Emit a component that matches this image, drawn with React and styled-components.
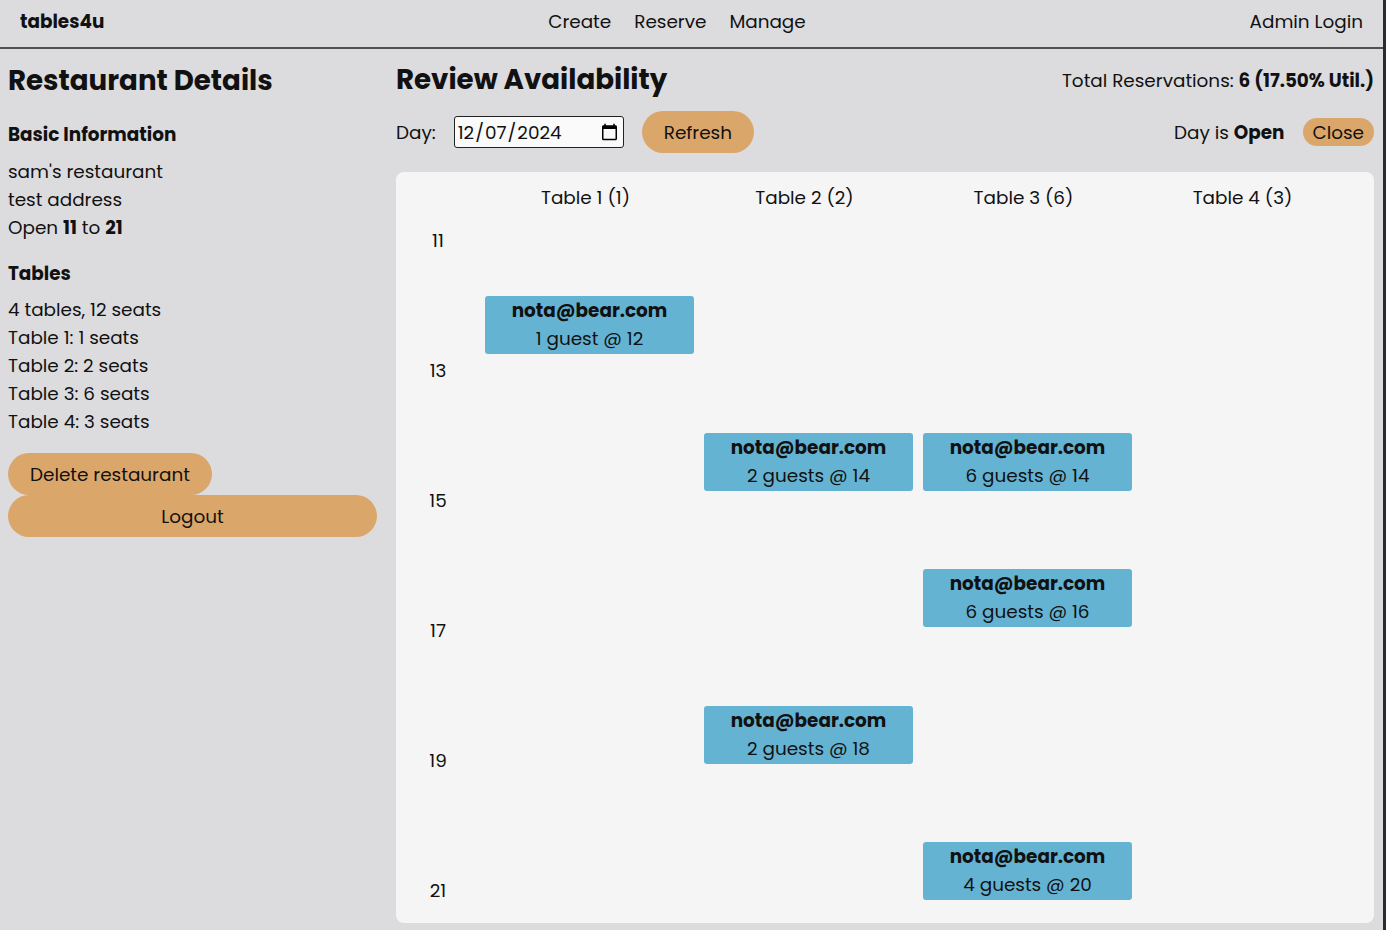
import React from "react";
import styled, { createGlobalStyle } from "styled-components";

const FONT = `"Poppins", "Inter", "Noto Sans", sans-serif`;
const FS = "18.4px";

const Global = createGlobalStyle`
  html, body { margin: 0; padding: 0; background: #dcdcdf; }
  body { font-family: ${FONT}; color: #111; }
  * { box-sizing: border-box; }
`;

const Page = styled.div`
  width: 1386px;
  height: 930px;
  background: #dcdcdf;
  border-right: 3px solid #2b2b2b;
  overflow: hidden;
`;

const TopBar = styled.header`
  height: 49px;
  display: flex;
  align-items: center;
  justify-content: space-between;
  padding: 0 20px 4px;
  border-bottom: 2px solid #505050;
  font-size: ${FS};
`;

const Brand = styled.div`
  font-weight: 700;
`;

const Nav = styled.nav`
  display: flex;
  gap: 23px;
`;

const NavLink = styled.span`
  font-weight: 400;
`;

const Body = styled.div`
  display: flex;
  gap: 18px;
  padding: 11px 9px 0 8px;
`;

const Side = styled.aside`
  width: 370px;
  flex: none;
  display: flex;
  flex-direction: column;
  padding-top: 1px;
`;

const Title = styled.h1`
  margin: 0;
  font-size: 27.7px;
  line-height: 40px;
  font-weight: 700;
`;

const SubHead = styled.h3`
  margin: ${(p) => p.$mt}px 0 ${(p) => p.$mb}px;
  font-size: ${FS};
  line-height: 28px;
  font-weight: 700;
`;

const Line = styled.div`
  font-size: ${FS};
  line-height: 28px;
  b { font-weight: 700; }
`;

const Pill = styled.button`
  font-family: ${FONT};
  font-size: ${FS};
  color: #111;
  background: #dba66a;
  border: none;
  border-radius: 999px;
  height: ${(p) => p.$h}px;
  padding: 0 ${(p) => p.$px}px;
  width: ${(p) => (p.$full ? "100%" : "auto")};
  align-self: flex-start;
  cursor: pointer;
`;

const ButtonStack = styled.div`
  margin-top: 17px;
  display: flex;
  flex-direction: column;
  width: 369px;
`;

const Main = styled.main`
  flex: 1;
  display: flex;
  flex-direction: column;
`;

const Row = styled.div`
  display: flex;
  align-items: center;
  justify-content: space-between;
  height: ${(p) => p.$h}px;
  margin-top: ${(p) => p.$mt || 0}px;
`;

const Group = styled.div`
  display: flex;
  align-items: center;
  gap: ${(p) => p.$gap}px;
  font-size: ${FS};
  b { font-weight: 700; }
`;

const DateBox = styled.input`
  font-family: ${FONT};
  font-size: ${FS};
  width: 170px;
  height: 32px;
  padding: 0 2px;
  border: 1px solid #222;
  border-radius: 3px;
  background: #fafafa;
  color: #111;
`;

const Panel = styled.section`
  margin-top: 19px;
  background: #f5f5f5;
  border-radius: 8px;
  display: flex;
  padding: 0 18px 18px 0;
`;

const HourCol = styled.div`
  width: 84px;
  flex: none;
  display: flex;
  flex-direction: column;
  align-items: center;
  gap: 103px;
  padding-top: 54.5px;
`;

const Hour = styled.div`
  font-size: ${FS};
  line-height: 27px;
`;

const TableCol = styled.div`
  width: 219px;
  flex: none;
  display: flex;
  flex-direction: column;
`;

const TableHead = styled.div`
  height: 50.75px;
  display: flex;
  align-items: center;
  justify-content: center;
  font-size: ${FS};
  padding-right: 8px;
`;

const Slot = styled.div`
  height: 68.25px;
  padding: 5px 5px;
`;

const Booking = styled.div`
  height: 100%;
  background: #65b3d3;
  border-radius: 3px;
  display: flex;
  flex-direction: column;
  align-items: center;
  justify-content: center;
  font-size: ${FS};
  line-height: 28px;
  b { font-weight: 700; }
`;

const tables = [
  { name: "Table 1", seats: 1 },
  { name: "Table 2", seats: 2 },
  { name: "Table 3", seats: 6 },
  { name: "Table 4", seats: 3 },
];

const bookings = {
  "0-12": 1,
  "1-14": 2,
  "2-14": 6,
  "2-16": 6,
  "1-18": 2,
  "2-20": 4,
};

const slots = [11, 12, 13, 14, 15, 16, 17, 18, 19, 20];

export default function App() {
  return (
    <>
      <Global />
      <Page>
        <TopBar>
          <Brand>tables4u</Brand>
          <Nav>
            <NavLink>Create</NavLink>
            <NavLink>Reserve</NavLink>
            <NavLink>Manage</NavLink>
          </Nav>
          <NavLink>Admin Login</NavLink>
        </TopBar>
        <Body>
          <Side>
            <Title>Restaurant Details</Title>
            <SubHead $mt={20} $mb={9}>Basic Information</SubHead>
            <Line>sam's restaurant</Line>
            <Line>test address</Line>
            <Line>
              Open <b>11</b> to <b>21</b>
            </Line>
            <SubHead $mt={18} $mb={8}>Tables</SubHead>
            <Line>4 tables, 12 seats</Line>
            {tables.map((t) => (
              <Line key={t.name}>
                {t.name}: {t.seats} seats
              </Line>
            ))}
            <ButtonStack>
              <Pill $h={42} $px={22}>Delete restaurant</Pill>
              <Pill $h={42} $px={0} $full>
                Logout
              </Pill>
            </ButtonStack>
          </Side>
          <Main>
            <Row $h={40}>
              <Title>Review Availability</Title>
              <Group $gap={0}>
                Total Reservations:&nbsp;<b>6 (17.50% Util.)</b>
              </Group>
            </Row>
            <Row $h={42} $mt={11}>
              <Group $gap={18}>
                <span>Day:</span>
                <DateBox type="date" defaultValue="2024-12-07" />
                <Pill $h={42} $px={22}>Refresh</Pill>
              </Group>
              <Group $gap={18}>
                <span>
                  Day is <b>Open</b>
                </span>
                <Pill $h={28} $px={10}>Close</Pill>
              </Group>
            </Row>
            <Panel>
              <HourCol>
                {[11, 13, 15, 17, 19, 21].map((h) => (
                  <Hour key={h}>{h}</Hour>
                ))}
              </HourCol>
              {tables.map((t, i) => (
                <TableCol key={t.name}>
                  <TableHead>
                    {t.name} ({t.seats})
                  </TableHead>
                  {slots.map((h) => {
                    const g = bookings[`${i}-${h}`];
                    return (
                      <Slot key={h}>
                        {g ? (
                          <Booking>
                            <b>nota@bear.com</b>
                            <span>
                              {g} {g === 1 ? "guest" : "guests"} @ {h}
                            </span>
                          </Booking>
                        ) : null}
                      </Slot>
                    );
                  })}
                </TableCol>
              ))}
            </Panel>
          </Main>
        </Body>
      </Page>
    </>
  );
}
